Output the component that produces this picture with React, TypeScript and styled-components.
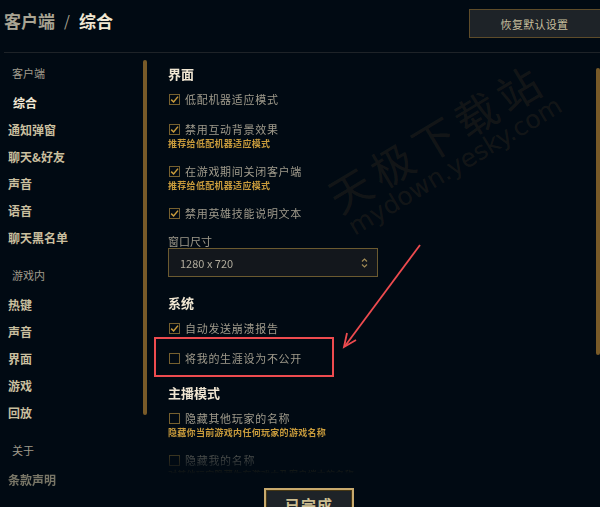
import styled, { createGlobalStyle } from 'styled-components';

const GlobalStyle = createGlobalStyle`
  html, body {
    margin: 0;
    padding: 0;
    background: #010a13;
  }
  body {
    font-family: "Noto Sans CJK SC", "Noto Sans", sans-serif;
  }
`;

const Window = styled.div`
  position: relative;
  width: 600px;
  height: 507px;
  overflow: hidden;
  background: #010a13;
  display: flex;
  flex-direction: column;
`;

const Header = styled.header`
  flex-shrink: 0;
  display: flex;
  justify-content: space-between;
  align-items: flex-start;
  height: 52px;
  margin-left: 4px;
  border-bottom: 1px solid #1e2328;
`;

const Title = styled.h1`
  margin: 10px 0 0;
  display: flex;
  gap: 9px;
  font-size: 17px;
  line-height: 22px;
  font-weight: 700;
`;

const Crumb = styled.span<{ active?: boolean }>`
  color: ${({ active }) => (active ? '#f0e6d2' : '#a8a392')};
`;

const Slash = styled.span`
  color: #a8a392;
  font-weight: 400;
  font-size: 15px;
`;

const ResetButton = styled.button`
  margin: 9px -2px 0 0;
  width: 133px;
  height: 29px;
  background: #1e2328;
  border: 1px solid #5e4c2a;
  color: #c8bf9e;
  font-family: inherit;
  font-size: 11px;
  letter-spacing: 0.3px;
  padding: 0 2px 0 0;
`;

const Body = styled.div`
  flex-shrink: 0;
  display: flex;
  height: 425px;
`;

const Sidebar = styled.nav`
  width: 143px;
  flex-shrink: 0;
  padding: 7px 0 0 8px;
  box-sizing: border-box;
  display: flex;
  flex-direction: column;
`;

const NavGroup = styled.div`
  display: flex;
  flex-direction: column;
  & + & {
    margin-top: 11px;
  }
`;

const GroupLabel = styled.div`
  height: 27px;
  line-height: 27px;
  padding-left: 4px;
  margin-bottom: 2px;
  font-size: 11px;
  color: #a09b8c;
`;

const NavItem = styled.div<{ active?: boolean; dim?: boolean }>`
  height: 27px;
  line-height: 27px;
  padding-left: ${({ active }) => (active ? '5px' : '0')};
  font-size: 12px;
  font-weight: 700;
  color: ${({ active }) => (active ? '#f0e6d2' : '#c9bf9f')};
  opacity: ${({ dim }) => (dim ? 0.6 : 1)};
`;

const ScrollThumb = styled.div<{ top: number; length: number }>`
  width: 4px;
  flex-shrink: 0;
  margin-top: ${({ top }) => top}px;
  height: ${({ length }) => length}px;
  border-radius: 2px;
  background: #785a28;
`;

const Content = styled.main`
  flex: 1;
  padding: 12px 0 0 21px;
  display: flex;
  flex-direction: column;
  gap: 17px;
  overflow: hidden;
  -webkit-mask-image: linear-gradient(to bottom, #000 calc(100% - 42px), transparent calc(100% - 4px));
  mask-image: linear-gradient(to bottom, #000 calc(100% - 42px), transparent calc(100% - 4px));
`;

const Section = styled.section`
  display: flex;
  flex-direction: column;
`;

const Heading = styled.h2`
  margin: 0 0 7px;
  font-size: 13px;
  line-height: 18px;
  font-weight: 700;
  color: #f0e6d2;
`;

const Options = styled.div`
  display: flex;
  flex-direction: column;
  gap: 12px;
`;

const Option = styled.div`
  display: flex;
  flex-direction: column;
`;

const Row = styled.label`
  display: flex;
  align-items: center;
  gap: 5px;
  height: 18px;
  padding-left: 1px;
  font-size: 11px;
  letter-spacing: 0.7px;
  color: #a09b8c;
`;

const Box = styled.span`
  width: 11px;
  height: 11px;
  box-sizing: border-box;
  border: 1px solid #76602f;
  display: flex;
  align-items: center;
  justify-content: center;
`;

const Hint = styled.div`
  font-size: 9px;
  line-height: 12px;
  font-weight: 700;
  letter-spacing: 0.3px;
  color: #c89b3c;
`;

const FieldLabel = styled.div`
  font-size: 11px;
  line-height: 14px;
  color: #a09b8c;
`;

const Select = styled.div`
  width: 210px;
  height: 29px;
  box-sizing: border-box;
  border: 1px solid #6b5a30;
  background: #13171c;
  display: flex;
  align-items: center;
  justify-content: space-between;
  padding: 0 9px 0 11px;
  font-size: 11px;
  color: #b0ab9c;
`;

const Footer = styled.footer`
  flex: 1;
  min-height: 0;
  padding: 10px 0 0 264px;
`;

const DoneButton = styled.button`
  width: 90px;
  height: 32px;
  background: #1e2328;
  border: 2px solid #c8aa6e;
  box-shadow: inset 0 0 0 1px #463714;
  color: #cdbe91;
  font-family: inherit;
  font-size: 15px;
  font-weight: 700;
  letter-spacing: 1px;
`;

const Watermark = styled.span<{ x: number; y: number; size: number; spacing: number }>`
  position: absolute;
  left: ${({ x }) => x}px;
  top: ${({ y }) => y}px;
  transform: translate(-50%, -50%) rotate(-31deg);
  white-space: nowrap;
  font-family: "DejaVu Sans", "Noto Sans CJK SC", sans-serif;
  font-size: ${({ size }) => size}px;
  letter-spacing: ${({ spacing }) => spacing}px;
  color: rgba(115, 85, 45, 0.18);
  pointer-events: none;
`;

const Highlight = styled.div`
  position: absolute;
  left: 154px;
  top: 337px;
  width: 180px;
  height: 40px;
  box-sizing: border-box;
  border: 2px solid #ee4b4f;
  pointer-events: none;
`;

const Arrow = styled.svg`
  position: absolute;
  left: 0;
  top: 0;
  pointer-events: none;
`;

function Check({ on }: { on?: boolean }) {
  return (
    <Box>
      {on && (
        <svg width="9" height="9" viewBox="0 0 9 9">
          <path d="M1.2 4.6 L3.6 7 L8 1.6" fill="none" stroke="#c89b3c" strokeWidth="1.5" />
        </svg>
      )}
    </Box>
  );
}

type Opt = { label: string; on?: boolean; hint?: string };

function OptionList({ items }: { items: Opt[] }) {
  return (
    <>
      {items.map((o) => (
        <Option key={o.label}>
          <Row>
            <Check on={o.on} />
            {o.label}
          </Row>
          {o.hint && <Hint>{o.hint}</Hint>}
        </Option>
      ))}
    </>
  );
}

const navGroups = [
  { label: '客户端', items: ['综合', '通知弹窗', '聊天&好友', '声音', '语音', '聊天黑名单'] },
  { label: '游戏内', items: ['热键', '声音', '界面', '游戏', '回放'] },
  { label: '关于', items: ['条款声明'] },
];

const lowSpec = '推荐给低配机器适应模式';

export default function App() {
  return (
    <Window>
      <GlobalStyle />
      <Header>
        <Title>
          <Crumb>客户端</Crumb>
          <Slash>/</Slash>
          <Crumb active>综合</Crumb>
        </Title>
        <ResetButton>恢复默认设置</ResetButton>
      </Header>

      <Body>
        <Sidebar>
          {navGroups.map((g) => (
            <NavGroup key={g.label}>
              <GroupLabel>{g.label}</GroupLabel>
              {g.items.map((it) => (
                <NavItem key={it} active={it === '综合'} dim={it === '条款声明'}>
                  {it}
                </NavItem>
              ))}
            </NavGroup>
          ))}
        </Sidebar>
        <ScrollThumb top={7} length={355} />

        <Content>
          <Section>
            <Heading>界面</Heading>
            <Options>
              <OptionList
                items={[
                  { label: '低配机器适应模式', on: true },
                  { label: '禁用互动背景效果', on: true, hint: lowSpec },
                  { label: '在游戏期间关闭客户端', on: true, hint: lowSpec },
                  { label: '禁用英雄技能说明文本', on: true },
                ]}
              />
              <div>
                <FieldLabel>窗口尺寸</FieldLabel>
                <Select>
                  1280 x 720
                  <svg width="7" height="12" viewBox="0 0 7 12">
                    <path d="M1 4.5 L3.5 2 L6 4.5 M1 7.5 L3.5 10 L6 7.5" fill="none" stroke="#a08a55" strokeWidth="1.2" />
                  </svg>
                </Select>
              </div>
            </Options>
          </Section>

          <Section>
            <Heading>系统</Heading>
            <Options>
              <OptionList
                items={[
                  { label: '自动发送崩溃报告', on: true },
                  { label: '将我的生涯设为不公开' },
                ]}
              />
            </Options>
          </Section>

          <Section>
            <Heading>主播模式</Heading>
            <Options>
              <OptionList
                items={[
                  { label: '隐藏其他玩家的名称', hint: '隐藏你当前游戏内任何玩家的游戏名称' },
                  { label: '隐藏我的名称', hint: '对其他玩家隐藏你在游戏内及客户端中的名称' },
                ]}
              />
            </Options>
          </Section>
        </Content>
        <ScrollThumb top={15} length={287} />
      </Body>

      <Footer>
        <DoneButton>已完成</DoneButton>
      </Footer>

      <Watermark x={436} y={136} size={42} spacing={7}>
        天极下载站
      </Watermark>
      <Watermark x={455} y={166} size={25} spacing={0}>
        mydown.yesky.com
      </Watermark>

      <Highlight />
      <Arrow width="600" height="507" viewBox="0 0 600 507">
        <path d="M420 245 L345 346" stroke="#ee4b4f" strokeWidth="1.8" fill="none" />
        <path d="M356 340 L344 347 L347 333" stroke="#ee4b4f" strokeWidth="1.8" fill="none" />
      </Arrow>
    </Window>
  );
}
